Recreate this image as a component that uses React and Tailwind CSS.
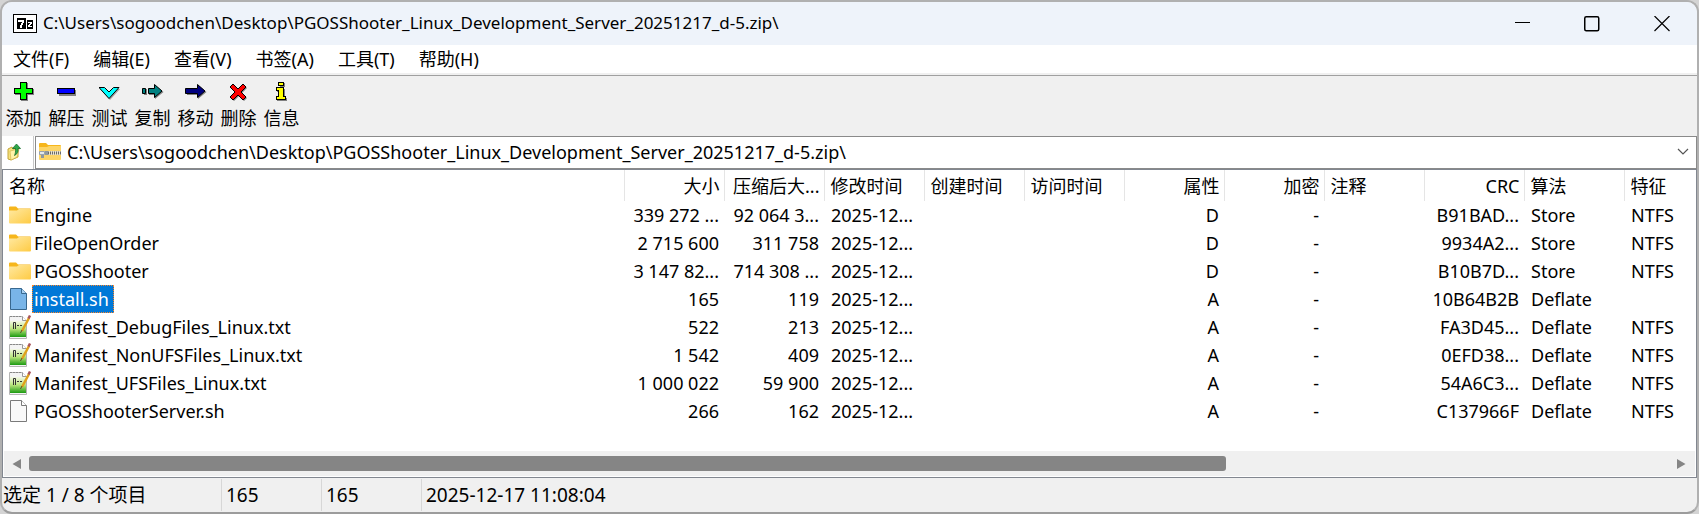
import React, { useState } from 'react';

const ARCHIVE_PATH = 'C:\\Users\\sogoodchen\\Desktop\\PGOSShooter_Linux_Development_Server_20251217_d-5.zip\\';

const menus = ['文件(F)', '编辑(E)', '查看(V)', '书签(A)', '工具(T)', '帮助(H)'];

const AddIcon = () => (
  <svg width="22" height="20" viewBox="0 0 22 20" shapeRendering="crispEdges">
    <path d="M8 1h7v6h6v6h-6v6H8v-6H2V8h6z" fill="#808080" />
    <path d="M7.500.5h6v6h6v5h-6v6h-6v-6h-6v-5h6z" fill="#00ff00" stroke="#000" />
  </svg>
);

const ExtractIcon = () => (
  <svg width="22" height="20" viewBox="0 0 22 20" shapeRendering="crispEdges">
    <path d="M3 8h17v6H3z" fill="#808080" />
    <path d="M1.500 6.500h17v5h-17z" fill="#0000ff" stroke="#000" />
  </svg>
);

const TestIcon = () => (
  <svg width="22" height="20" viewBox="0 0 22 20">
    <path d="M1 7h5l5 4.500L16 7h5L11 18z" fill="#a0a0a0" />
    <path d="M0 5.500h5.500l4.500 4.500 4.500-4.500h5.500L10 16.500z" fill="#00ffff" stroke="#000" />
  </svg>
);

const CopyIcon = () => (
  <svg width="22" height="20" viewBox="0 0 22 20">
    <path d="M2 7h3v6H2zM7 7h6V3l8.500 7-8.500 7v-4H7z" fill="#808080" />
    <path d="M.5 6.500h3v5h-3zM6.500 6.500h6v-4l7.500 6.500-7.500 6.500v-4h-6z" fill="#008080" stroke="#000" />
  </svg>
);

const MoveIcon = () => (
  <svg width="22" height="20" viewBox="0 0 22 20">
    <path d="M2 7h11V3l8.500 7-8.500 7v-4H2z" fill="#808080" />
    <path d="M.5 6.500h12v-4l7.500 6.500-7.500 6.500v-4h-12z" fill="#000080" stroke="#000" />
  </svg>
);

const DeleteIcon = () => (
  <svg width="22" height="20" viewBox="0 0 22 20">
    <path d="M3 6l3-3 5 5 5-5 3 3-5 5 5 5-3 3-5-5-5 5-3-3 5-5z" fill="#808080" />
    <path d="M2 5l3-3 5 5 5-5 3 3-5 5 5 5-3 3-5-5-5 5-3-3 5-5z" fill="#ff0000" stroke="#000" />
  </svg>
);

const InfoIcon = () => (
  <svg width="22" height="20" viewBox="0 0 22 20" shapeRendering="crispEdges">
    <path d="M9 1h5v4H9zM6 7h8v9h2v3H6v-3h2v-6H6z" fill="#808080" />
    <path d="M7.500.5h5v3h-5zM5.500 5.500h7v9h2v3h-9v-3h2v-6h-2z" fill="#ffff00" stroke="#000" />
  </svg>
);

const tools = [
  { label: '添加', Icon: AddIcon },
  { label: '解压', Icon: ExtractIcon },
  { label: '测试', Icon: TestIcon },
  { label: '复制', Icon: CopyIcon },
  { label: '移动', Icon: MoveIcon },
  { label: '删除', Icon: DeleteIcon },
  { label: '信息', Icon: InfoIcon },
];

const FolderIcon = () => (
  <svg className="shrink-0" width="24" height="24" viewBox="0 0 24 24">
    <defs>
      <linearGradient id="folder" x1="0" y1="0" x2="1" y2="1">
        <stop offset="0" stopColor="#ffe9a2" />
        <stop offset="1" stopColor="#fecb44" />
      </linearGradient>
    </defs>
    <path d="M1 4.500a1 1 0 0 1 1-1h6l2 2h12a1 1 0 0 1 1 1V19H1z" fill="#f6b61c" />
    <path d="M1 7.500h8l2-1.500h12v13.500a1 1 0 0 1-1 1H2a1 1 0 0 1-1-1z" fill="url(#folder)" />
  </svg>
);

const FileIcon = ({ selected }) => (
  <svg className="shrink-0" width="24" height="24" viewBox="0 0 24 24">
    <path
      d="M2.500 1.500h11l5 5v16h-16z"
      fill={selected ? '#79b5e8' : '#f9f9f9'}
      stroke={selected ? '#38688f' : '#7a7a7a'}
    />
    <path d="M13.500 1.500v5h5" fill={selected ? '#a8d0f2' : '#fff'} stroke={selected ? '#38688f' : '#7a7a7a'} />
  </svg>
);

const NotepadIcon = () => (
  <svg className="shrink-0" width="24" height="24" viewBox="0 0 24 24">
    <defs>
      <linearGradient id="notepad" x1="0" y1="0" x2="0" y2="1">
        <stop offset="0" stopColor="#f4f8e6" />
        <stop offset="0.500" stopColor="#b9e57c" />
        <stop offset="1" stopColor="#1c9a12" />
      </linearGradient>
    </defs>
    <path d="M1.500 1.500h13l4 4v18h-17z" fill="#f4f4f4" stroke="#b5b5b5" />
    <path d="M2 1.500h12" stroke="#888" strokeDasharray="2 1" />
    <path d="M14.500 1.500v4h4" fill="#fff" stroke="#999" />
    <path d="M2 6h16v16H2z" fill="url(#notepad)" />
    <path d="M5.500 14V7.500h2V14M9 10.500h2M12 10.500h2" fill="none" stroke="#333" />
    <path d="M21 3L14 16" stroke="#e0a21c" strokeWidth="2.500" />
    <path d="M22 .5l-1.500 3" stroke="#a8555a" strokeWidth="2.500" />
    <path d="M14 15l-1.500 3" stroke="#5a4a2a" strokeWidth="1" />
  </svg>
);

const ZipFolderIcon = () => (
  <svg className="shrink-0" width="24" height="24" viewBox="0 0 24 24">
    <path d="M1 4a1 1 0 0 1 1-1h6l2 2h12a1 1 0 0 1 1 1v4H1z" fill="#f6b61c" />
    <path d="M1 7h8l2-1h12v13a1 1 0 0 1-1 1H2a1 1 0 0 1-1-1z" fill="#fdd566" />
    <path d="M8 11h15v4H8z" fill="#e9e2cc" />
    <path d="M8 13h15" stroke="#6b6b6b" strokeWidth="3" strokeDasharray="1 1" />
    <path d="M1.500 11.500h5v3h-5z" fill="#e4e8eb" stroke="#9aa3ab" />
    <path d="M3 15h3v3H3zM7 11h3v4H7z" fill="#8f989f" />
  </svg>
);

const UpIcon = () => (
  <svg width="16" height="18" viewBox="0 0 16 18">
    <path d="M1 6l4-2 1 2 5-1v9l-7 3-3-1z" fill="#f7e27c" stroke="#c4a63a" />
    <path d="M3 8l9-2-2 8-6 3z" fill="#fff3a8" stroke="#c4a63a" strokeWidth="0.500" />
    <path d="M9.500 1l4 4.500h-2.500c.5 3-.5 5.500-3.500 7 1-2 1.200-4.500 1-7H5.500z" fill="#2fa84a" stroke="#16702c" strokeWidth="0.800" />
  </svg>
);

const AppIcon = () => (
  <svg className="shrink-0" width="24" height="19" viewBox="0 0 24 19" shapeRendering="crispEdges">
    <path d="M.5.5h23v18H.5z" fill="#fff" stroke="#000" />
    <path d="M4 4h9v11H4zM14 6h6v9h-6z" fill="#000" />
    <path d="M5 6h6v3h-1v2H9v3H7v-3h1V9h1V8H5z" fill="#fff" />
    <path d="M15 8h4v2h-1v1h-1v1h2v1h-4v-2h1v-1h1V9h-2z" fill="#fff" />
  </svg>
);

const columns = [
  { key: 'name', label: '名称' },
  { key: 'size', label: '大小', right: true },
  { key: 'packed', label: '压缩后大...', right: true },
  { key: 'modified', label: '修改时间' },
  { key: 'created', label: '创建时间' },
  { key: 'accessed', label: '访问时间' },
  { key: 'attr', label: '属性', right: true },
  { key: 'encrypted', label: '加密', right: true },
  { key: 'comment', label: '注释' },
  { key: 'crc', label: 'CRC', right: true },
  { key: 'method', label: '算法' },
  { key: 'traits', label: '特征' },
];

const files = [
  { name: 'Engine', Icon: FolderIcon, size: '339 272 ...', packed: '92 064 3...', attr: 'D', crc: 'B91BAD...', method: 'Store', traits: 'NTFS' },
  { name: 'FileOpenOrder', Icon: FolderIcon, size: '2 715 600', packed: '311 758', attr: 'D', crc: '9934A2...', method: 'Store', traits: 'NTFS' },
  { name: 'PGOSShooter', Icon: FolderIcon, size: '3 147 82...', packed: '714 308 ...', attr: 'D', crc: 'B10B7D...', method: 'Store', traits: 'NTFS' },
  { name: 'install.sh', Icon: FileIcon, size: '165', packed: '119', attr: 'A', crc: '10B64B2B', method: 'Deflate', traits: '' },
  { name: 'Manifest_DebugFiles_Linux.txt', Icon: NotepadIcon, size: '522', packed: '213', attr: 'A', crc: 'FA3D45...', method: 'Deflate', traits: 'NTFS' },
  { name: 'Manifest_NonUFSFiles_Linux.txt', Icon: NotepadIcon, size: '1 542', packed: '409', attr: 'A', crc: '0EFD38...', method: 'Deflate', traits: 'NTFS' },
  { name: 'Manifest_UFSFiles_Linux.txt', Icon: NotepadIcon, size: '1 000 022', packed: '59 900', attr: 'A', crc: '54A6C3...', method: 'Deflate', traits: 'NTFS' },
  { name: 'PGOSShooterServer.sh', Icon: FileIcon, size: '266', packed: '162', attr: 'A', crc: 'C137966F', method: 'Deflate', traits: 'NTFS' },
].map((f) => ({ ...f, modified: '2025-12...', encrypted: '-' }));

const App = () => {
  const [selected, setSelected] = useState('install.sh');
  const [path, setPath] = useState(ARCHIVE_PATH);

  return (
    <div className="bg-[#d4d4d4] font-['Noto_Sans','Noto_Sans_CJK_SC',sans-serif] text-[18px] leading-7 text-black">
      <div className="flex min-h-screen flex-col overflow-hidden rounded-xl border-2 border-[#b0b0b0] border-b-[#9c9c9c] bg-[#f0f0f0]">
        {/* Title bar */}
        <header className="flex h-[43px] items-center bg-[#eef3fa] pl-[11px]">
          <AppIcon />
          <h1 className="ml-[6px] flex-1 truncate pb-px text-[17px]">{ARCHIVE_PATH}</h1>
          <button aria-label="最小化" className="flex h-full w-[70px] items-center justify-center">
            <svg width="16" height="16" viewBox="0 0 16 16"><path d="M1 6.500h15" stroke="#000" /></svg>
          </button>
          <button aria-label="最大化" className="flex h-full w-[70px] items-center justify-center">
            <svg width="16" height="16" viewBox="0 0 16 16"><rect x="0.750" y="0.750" width="14" height="14" rx="1.500" fill="none" stroke="#000" strokeWidth="1.500" /></svg>
          </button>
          <button aria-label="关闭" className="flex h-full w-[70px] items-center justify-center">
            <svg width="16" height="16" viewBox="0 0 16 16"><path d="M.5 0l15 15M15.500 0l-15 15" stroke="#000" strokeWidth="1.200" /></svg>
          </button>
        </header>

        <nav className="flex h-7 items-center gap-6 bg-white pl-[11px]">
          {menus.map((m) => (
            <button key={m}>{m}</button>
          ))}
        </nav>

        {/* Toolbar */}
        <div className="mt-[2px] flex border-t border-[#a0a0a0] pb-[2px]">
          {tools.map(({ label, Icon }) => (
            <button key={label} className="flex w-[43px] flex-col items-center pt-[6px]">
              <Icon />
              <span className="leading-8">{label}</span>
            </button>
          ))}
        </div>

        {/* Address bar */}
        <div className="flex h-[33px] bg-white">
          <button aria-label="上级目录" className="mr-px flex w-8 items-center border-r border-[#c8c8c8] pb-[2px] pl-[5px]">
            <UpIcon />
          </button>
          <label className="flex flex-1 items-center border border-[#8a8a8a] pb-[2px] pl-[2px]">
            <ZipFolderIcon />
            <input
              aria-label="路径"
              value={path}
              onChange={(e) => setPath(e.target.value)}
              className="ml-[5px] min-w-0 flex-1 bg-transparent outline-none"
            />
            <svg className="mr-[7px]" width="12" height="8" viewBox="0 0 12 8"><path d="M1 1l5 5 5-5" fill="none" stroke="#555" strokeWidth="1.200" /></svg>
          </label>
        </div>

        {/* File list */}
        <main className="flex flex-1 flex-col border border-[#828790] bg-white pb-px">
          <div className="flex-1 overflow-hidden">
            <table className="w-full table-fixed border-collapse">
              <colgroup>
                <col className="w-[621px]" />
                {columns.slice(1, -1).map((c) => <col key={c.key} className="w-[100px]" />)}
                <col />
              </colgroup>
              <thead>
                <tr className="h-[31px]">
                  {columns.map((c) => (
                    <th
                      key={c.key}
                      className={`overflow-hidden whitespace-nowrap border-r border-[#e5e5e5] pb-0 pl-[6px] pr-1 pt-px font-normal leading-[30px] last:border-r-0 ${c.right ? 'text-right' : 'text-left'}`}
                    >
                      {c.label}
                    </th>
                  ))}
                </tr>
              </thead>
              <tbody>
                {files.map((f) => (
                  <tr key={f.name} className="h-7" onClick={() => setSelected(f.name)}>
                    {columns.map((c) => (
                      <td key={c.key} className={`overflow-hidden whitespace-nowrap py-0 pl-[7px] pr-[5px] first:pl-[5px] ${c.right ? 'text-right' : 'text-left'}`}>
                        {c.key === 'name' ? (
                          <span className="flex h-7 items-center">
                            <f.Icon selected={selected === f.name} />
                            <span className={`pl-[2px] pr-[5px] ${selected === f.name ? 'bg-[#0078d7] text-white outline-1 -outline-offset-1 outline-dotted outline-[#ff8728]' : ''}`}>
                              {f.name}
                            </span>
                          </span>
                        ) : f[c.key]}
                      </td>
                    ))}
                  </tr>
                ))}
              </tbody>
            </table>
          </div>
          <div className="mx-px flex h-[25px] items-center bg-[#f0f0f0] pl-2 pr-[9px]">
            <svg width="9" height="12" viewBox="0 0 9 12"><path d="M9 1v10L.5 6z" fill="#858585" /></svg>
            <div className="mx-2 flex-1">
              <div className="h-[15px] w-[73%] rounded-[3px] bg-[#858585]" />
            </div>
            <svg width="9" height="12" viewBox="0 0 9 12"><path d="M0 1v10l8.500-5z" fill="#858585" /></svg>
          </div>
        </main>

        {/* Status bar */}
        <footer className="flex h-[34px] py-px text-[19px] leading-8">
          <span className="w-[220px] border-r border-[#d7d7d7] pl-px">选定 1 / 8 个项目</span>
          <span className="w-[100px] border-r border-[#d7d7d7] pl-1">165</span>
          <span className="w-[100px] border-r border-[#d7d7d7] pl-1">165</span>
          <span className="flex-1 pl-1">2025-12-17 11:08:04</span>
        </footer>
      </div>
    </div>
  );
};

export default App;
